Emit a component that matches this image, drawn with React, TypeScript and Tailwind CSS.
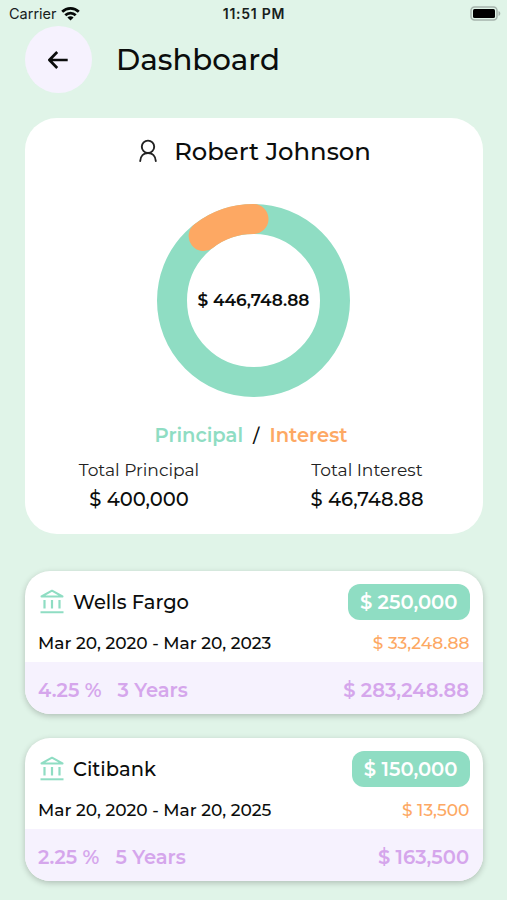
const TOTAL = 446748.88;
const INTEREST = 46748.88;

const loans = [
  {
    bank: "Wells Fargo",
    principal: "$ 250,000",
    dates: "Mar 20, 2020 - Mar 20, 2023",
    interest: "$ 33,248.88",
    rate: "4.25 %",
    term: "3 Years",
    total: "$ 283,248.88",
  },
  {
    bank: "Citibank",
    principal: "$ 150,000",
    dates: "Mar 20, 2020 - Mar 20, 2025",
    interest: "$ 13,500",
    rate: "2.25 %",
    term: "5 Years",
    total: "$ 163,500",
  },
];

function StatusBar() {
  return (
    <div className="grid h-[27px] grid-cols-3 items-center pr-[6px] pl-[9px] font-['Inter',sans-serif] text-[14.5px] leading-none text-[#17201c]">
      <div className="flex items-center gap-[5px]">
        <span className="w-[47px] pt-px">Carrier</span>
        <svg width="19" height="14" viewBox="0 0 19 14" fill="none" stroke="#050807" strokeWidth="2.7">
          <path d="M1.2 4.8a11.8 11.8 0 0 1 16.6 0" />
          <path d="M4.3 8.2a7.4 7.4 0 0 1 10.4 0" />
          <path d="M9.5 13.6 6.4 10.5a4.4 4.4 0 0 1 6.2 0Z" fill="#050807" stroke="none" />
        </svg>
      </div>
      <span className="pr-[2px] text-center text-[14px] font-semibold tracking-[0.75px]">11:51 PM</span>
      <svg className="-mt-px justify-self-end" width="31" height="15" viewBox="0 0 31 15">
        <rect x="1" y="1" width="26" height="13" rx="3.5" fill="none" stroke="#a5b3ac" strokeWidth="1.5" />
        <rect x="3" y="3" width="22" height="9" rx="1.5" fill="#000" />
        <path d="M28.5 5v5c2.4-1 2.4-4 0-5Z" fill="#a5b3ac" />
      </svg>
    </div>
  );
}

function Donut() {
  const radius = 81.5;
  const length = 2 * Math.PI * radius;
  const arc = (INTEREST / TOTAL) * length;

  return (
    <div className="grid size-[193px] place-items-center">
      <svg className="col-start-1 row-start-1" width="193" height="193" viewBox="0 0 193 193" fill="none" strokeWidth="30">
        <circle cx="96.5" cy="96.5" r={radius} stroke="#8fddc3" />
        <circle
          cx="96.5"
          cy="96.5"
          r={radius}
          stroke="#fda863"
          strokeLinecap="round"
          strokeDasharray={`${arc} ${length}`}
          transform="translate(193 0) scale(-1 1) rotate(-90 96.5 96.5)"
        />
      </svg>
      <span className="col-start-1 row-start-1 text-[17px] font-semibold">$ 446,748.88</span>
    </div>
  );
}

function BankIcon() {
  return (
    <svg width="24" height="26" viewBox="0 0 24 26" fill="none" stroke="#8fddc3" strokeWidth="2">
      <path d="M1.5 7.5 12 1.7 22.5 7.5Z" strokeLinejoin="round" />
      <path d="M4.5 11v8.5M12 11v8.5M19.5 11v8.5" strokeWidth="2.2" />
      <path d="M.5 23.3h23" />
    </svg>
  );
}

function LoanCard({ loan }: { loan: (typeof loans)[number] }) {
  return (
    <section className="h-[143px] overflow-hidden rounded-[25px] bg-white shadow-[0_2px_6px_rgba(0,0,0,0.22)]">
      <div className="h-[91px] pt-[12.5px] pr-[13.5px] pl-[13px]">
        <div className="flex h-9 items-center justify-between">
          <div className="flex items-center gap-[9px] pl-[2px]">
            <BankIcon />
            <h2 className="pt-[2px] text-[19.5px] font-medium">{loan.bank}</h2>
          </div>
          <span className="flex h-9 items-center rounded-xl bg-[#8fddc3] px-3 pt-[2px] text-[19.6px] font-semibold text-white">
            {loan.principal}
          </span>
        </div>
        <div className="mt-3 flex h-6 items-center justify-between text-[17.05px] font-medium">
          <span>{loan.dates}</span>
          <span className="text-[#fda863]">{loan.interest}</span>
        </div>
      </div>
      <div className="flex h-[52px] items-center justify-between bg-[#f6f2fe] pt-[6px] pr-[14px] pl-[13px] text-[19.5px] font-semibold text-[#d5a6ec]">
        <div className="flex gap-4">
          <span>{loan.rate}</span>
          <span>{loan.term}</span>
        </div>
        <span>{loan.total}</span>
      </div>
    </section>
  );
}

export default function App() {
  return (
    <div className="h-[900px] w-[507px] overflow-hidden bg-[#e0f4e8] font-['Montserrat','Inter',sans-serif] whitespace-nowrap text-[#0b0d0c]">
      <StatusBar />
      <header className="-mt-px flex h-[67px] items-center gap-6 pl-[25px]">
        <button className="flex size-[67px] items-center justify-center rounded-full bg-[#f6f2fe]" aria-label="Back">
          <svg width="22" height="20" viewBox="0 0 22 20" fill="none" stroke="#0b0d0c" strokeWidth="2.7" strokeLinejoin="round">
            <path d="M19.7 10H1.5M9.2 2 1.4 10l7.8 8" />
          </svg>
        </button>
        <h1 className="text-[29.3px] font-medium">Dashboard</h1>
      </header>

      <main className="pt-[25px] pr-6 pl-[25px]">
        <section className="flex h-[416px] flex-col items-center rounded-[32px] bg-white">
          <div className="mt-[17px] flex h-8 items-center gap-[17px] pl-[2px]">
            <svg width="18" height="24" viewBox="0 0 18 24" fill="none" stroke="#222" strokeWidth="1.9" strokeLinecap="round">
              <circle cx="9" cy="7.8" r="6.2" />
              <path d="M1.2 22c.3-5 3.4-8 7.8-8s7.5 3 7.8 8" />
            </svg>
            <h2 className="text-[24.3px] font-medium">Robert Johnson</h2>
          </div>
          <div className="mt-[37px] pr-px">
            <Donut />
          </div>
          <div className="mt-[25px] flex h-7 items-center gap-[10px] pr-[6px] text-[19.5px] font-semibold">
            <span className="text-[#8fddc3]">Principal</span>
            <span className="text-[18px] font-medium">/</span>
            <span className="text-[#fda863]">Interest</span>
          </div>
          <div className="mt-2 grid w-full grid-cols-2 pr-[2px] text-center">
            <div>
              <p className="text-[17.1px] leading-6 text-[#222]">Total Principal</p>
              <p className="mt-[3px] text-[19.5px] leading-7 font-medium">$ 400,000</p>
            </div>
            <div>
              <p className="text-[17.1px] leading-6 text-[#222]">Total Interest</p>
              <p className="mt-[3px] text-[19.5px] leading-7 font-medium">$ 46,748.88</p>
            </div>
          </div>
        </section>

        <div className="mt-[37px] flex flex-col gap-6">
          {loans.map((loan) => (
            <LoanCard key={loan.bank} loan={loan} />
          ))}
        </div>
      </main>
    </div>
  );
}
